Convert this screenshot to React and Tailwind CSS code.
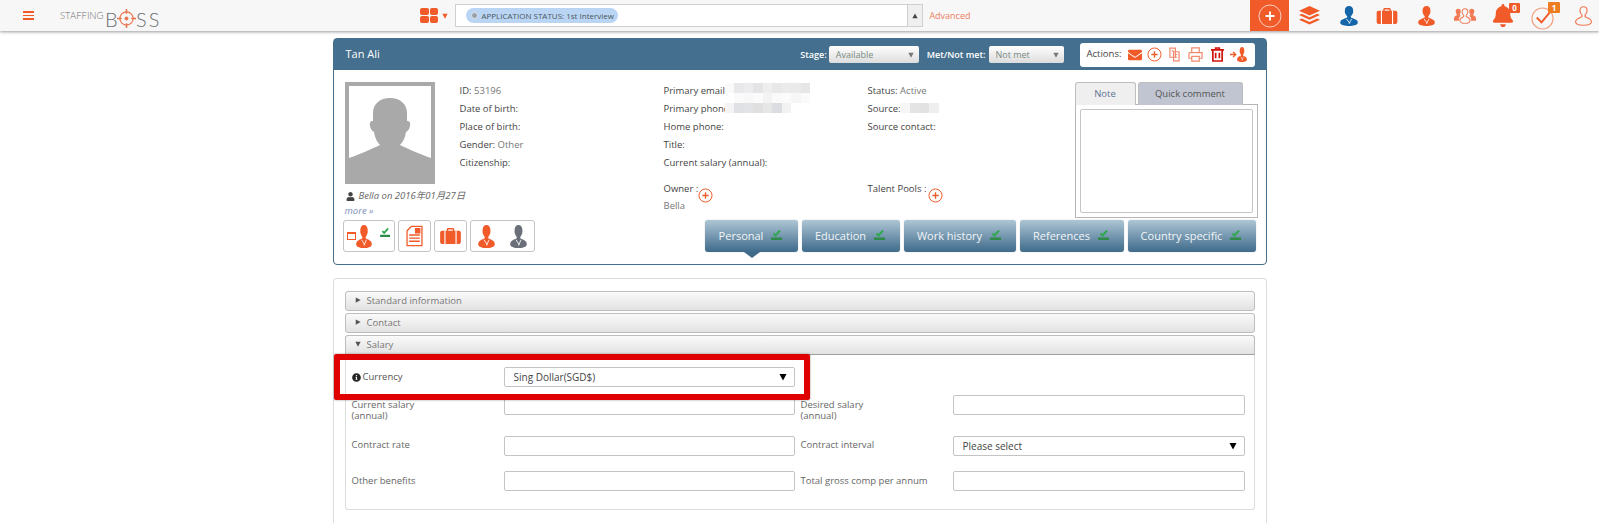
import React from 'react'
import { FaBell, FaEnvelope, FaInfoCircle, FaUser } from 'react-icons/fa'

const Bust = ({ className }) => (
  <svg viewBox="0 0 24 28" className={className} fill="currentColor" preserveAspectRatio="none">
    <path d="M12 0c3.500 0 5.500 2.500 5.500 6 0 1.500.3 3-.5 4.500-.6 1.500-1.500 3-2.500 4V16c2 1 6 2 8 4 1 1 1.500 3 1 4.500-1 2-6 3.500-11.500 3.500S1.500 26.500.5 24.500c-.5-1.500 0-3.500 1-4.500 2-2 6-3 8-4v-1.500c-1-1-1.900-2.500-2.500-4-.8-1.500-.5-3-.5-4.500C6.500 2.500 8.500 0 12 0z" />
    <path d="M8.500 18l4.500 6M15.500 18l-3.500 7" fill="none" stroke="#fff" strokeWidth="1.100" />
  </svg>
)

const OutlineBust = ({ className }) => (
  <svg viewBox="0 0 24 26" className={className} fill="none" stroke="currentColor" strokeWidth="1.500" preserveAspectRatio="none">
    <path d="M12 1c3 0 4.500 2.200 4.500 5 0 2.500-1 4.500-2.500 5.500V14c3 1.500 8 2.500 8 6.500 0 3-4 4.500-10 4.500S2 23.500 2 20.500c0-4 5-5 8-6.500v-2.500C8.500 10.500 7.500 8.500 7.500 6 7.500 3.200 9 1 12 1z" />
  </svg>
)

const Group = ({ className }) => (
  <svg viewBox="0 0 26 20" className={className} preserveAspectRatio="none">
    <path fill="currentColor" d="M5 1c2 0 3 1.500 3 3.300 0 1.500-.6 2.700-1.300 3.400v1.100l1.500.8C6.500 10.800 5.800 12.500 5.800 14.500V16H0v-3c0-2.200 2-3.200 3.300-3.800V7.700C2.600 7 2 5.800 2 4.300 2 2.500 3 1 5 1zM21 1c2 0 3 1.500 3 3.300 0 1.500-.6 2.700-1.300 3.400v1.500c1.300.6 3.300 1.600 3.300 3.800v3h-5.800v-1.500c0-2-.7-3.700-2.400-4.700l1.500-.8V7.700C18.600 7 18 5.800 18 4.300 18 2.500 19 1 21 1z" />
    <path fill="#f7f7f7" stroke="currentColor" strokeWidth="1.200" d="M13 1c2.300 0 3.400 1.800 3.400 3.800 0 1.800-.8 3.400-1.900 4.200v1.800c1.800.9 4.500 1.700 4.500 4.400 0 2.500-2.500 4-6 4s-6-1.500-6-4c0-2.700 2.700-3.500 4.500-4.400V9c-1.100-.8-1.900-2.400-1.900-4.200C9.600 2.800 10.700 1 13 1z" />
  </svg>
)

const Layers = ({ className }) => (
  <svg viewBox="0 0 22 20" className={className} fill="currentColor">
    <path d="M11 0l11 5-11 5L0 5z" />
    <path d="M0 9.500l3-1.300 8 3.600 8-3.600 3 1.300-11 5z" />
    <path d="M0 14.500l3-1.300 8 3.600 8-3.600 3 1.300-11 5z" />
  </svg>
)

const Briefcase = ({ className }) => (
  <svg viewBox="0 0 22 17" className={className} fill="currentColor">
    <path fillRule="evenodd" d="M7 3V1.500C7 .7 7.700 0 8.500 0h5c.8 0 1.500.7 1.500 1.500V3h5c1.100 0 2 .9 2 2v10c0 1.100-.9 2-2 2H2c-1.100 0-2-.9-2-2V5c0-1.100.9-2 2-2zm1.500-1.500V3h5V1.500z" />
    <path d="M4.500 3h1.200v14H4.500zM16.300 3h1.200v14h-1.200z" fill="#fff" />
  </svg>
)

const PlusCircle = ({ className }) => (
  <svg viewBox="0 0 20 20" className={className} fill="none" stroke="currentColor" strokeWidth="1.300">
    <circle cx="10" cy="10" r="8.700" />
    <path d="M10 5.800v8.400M5.800 10h8.400" strokeWidth="1.800" />
  </svg>
)

const Check = ({ className }) => (
  <svg viewBox="0 0 12 10" className={className}>
    <path d="M2.500 3.500l2 2 4.500-5" fill="none" stroke="#2fa84f" strokeWidth="2" />
    <path d="M0 7.500h11V10H0z" fill="#2e8b47" />
  </svg>
)

const Caret = ({ className }) => (
  <svg viewBox="0 0 8 8" className={className} fill="currentColor">
    <path d="M.5 1h7L4 7.500z" />
  </svg>
)

const GridIcon = () => (
  <div className="grid grid-cols-2 gap-[1px] w-[18px] h-[15px]">
    <span className="bg-[#f15a29] rounded-[2px]" />
    <span className="bg-[#f15a29] rounded-[2px]" />
    <span className="bg-[#f15a29] rounded-[2px]" />
    <span className="bg-[#f15a29] rounded-[2px]" />
  </div>
)

const Logo = () => (
  <div className="flex items-start h-[24px] ml-[26px] text-[#6d6e71] font-['Lato',sans-serif] font-light">
    <span className="text-[9.500px] leading-[10px] mt-[7px] w-[45px]">STAFFING</span>
    <span className="text-[20px] leading-[20px] mt-[5px] w-[12px]">B</span>
    <svg viewBox="0 0 20 20" className="w-[19px] h-[19px] mt-[5px] text-[#e8734a]" fill="none" stroke="currentColor">
      <circle cx="10" cy="10" r="7" strokeWidth="1.200" />
      <circle cx="10" cy="10" r="1.600" fill="currentColor" />
      <path d="M10 0v5M10 15v5M0 10h5M15 10h5" strokeWidth="1.500" />
    </svg>
    <span className="text-[20px] leading-[20px] mt-[5px] tracking-[2px]">SS</span>
  </div>
)

const TopBar = () => (
  <header className="flex items-center h-[31px] bg-[#f7f7f7] shadow-[0_1px_3px_rgba(0,0,0,0.4)] relative text-[#f15a29]">
    <div className="flex flex-col gap-[2px] w-[11px] ml-[23px]">
      <span className="h-[1.500px] bg-[#f15a29]" />
      <span className="h-[1.500px] bg-[#f15a29]" />
      <span className="h-[1.500px] bg-[#f15a29]" />
    </div>
    <Logo />
    <div className="ml-[259px] flex items-center">
      <GridIcon />
      <Caret className="w-[6px] h-[6px] ml-[4px]" />
    </div>
    <div className="ml-[7px] flex items-stretch w-[468px] h-[23px] bg-white border border-[#cfcfcf]">
      <div className="flex-1 flex items-center pl-[10px]">
        <span className="flex items-center h-[15px] w-[152px] rounded-full bg-[#b9d5f3] pl-[5px] gap-[3px] text-[#4a5560] text-[8px] whitespace-nowrap">
          <span className="w-[7px] h-[7px] shrink-0 rounded-full bg-[#9aa3ad] border border-[#dfe5ea]" />
          APPLICATION STATUS: 1st Interview
        </span>
      </div>
      <div className="w-[15px] border-l border-[#cfcfcf] bg-[#efefef] flex items-center justify-center">
        <Caret className="w-[6px] h-[6px] rotate-180 text-[#444]" />
      </div>
    </div>
    <span className="ml-[6px] text-[9px] text-[#f08060]">Advanced</span>
    <div className="ml-auto flex items-center h-full">
      <div className="w-[39px] h-full bg-[#f15a29] flex items-center justify-center">
        <svg viewBox="0 0 24 24" className="w-[24px] h-[24px]" fill="none" stroke="#fff">
          <circle cx="12" cy="12" r="11" strokeOpacity="0.7" />
          <path d="M12 7.500v9M7.500 12h9" strokeWidth="1.800" />
        </svg>
      </div>
      <Layers className="w-[21px] h-[19px] ml-[10px]" />
      <Bust className="w-[18px] h-[20px] ml-[20px] text-[#1565a9]" />
      <Briefcase className="w-[22px] h-[16px] ml-[18px]" />
      <Bust className="w-[17px] h-[20px] ml-[20px]" />
      <Group className="w-[22px] h-[16px] ml-[19px] text-[#f27a55]" />
      <div className="relative ml-[16px] w-[28px] h-[24px]">
        <FaBell className="w-[22px] h-[23px]" />
        <span className="absolute -top-[1px] left-[17px] w-[11px] h-[10px] bg-[#f15a29] rounded-[1px] text-white text-[8px] leading-[10px] text-center font-bold">0</span>
      </div>
      <div className="relative ml-[11px] w-[29px] h-[24px]">
        <svg viewBox="0 0 24 24" className="w-[23px] h-[23px] mt-[3px]" fill="none" stroke="#f3a083" strokeWidth="1.200">
          <circle cx="12" cy="12" r="11" />
          <path d="M6 11l5 5 9-11" stroke="#f15a29" strokeWidth="2" />
        </svg>
        <span className="absolute -top-[2px] left-[17px] w-[12px] h-[11px] bg-[#ee7d22] rounded-[1px] text-white text-[8px] leading-[11px] text-center font-bold">1</span>
      </div>
      <OutlineBust className="w-[19px] h-[20px] ml-[14px] mr-[6px] text-[#f27a55]" />
    </div>
  </header>
)

const Row = ({ label, value, children }) => (
  <div className="relative h-[18px] leading-[18px] whitespace-nowrap">
    <span className="text-[#444]">{label}</span>
    {value && <span className="text-[#777]"> {value}</span>}
    {children}
  </div>
)

// blurred-out contact details
const Mosaic = ({ rows, className }) => (
  <div className={`absolute z-10 flex flex-col ${className}`}>
    {rows.map((row, i) => (
      <div key={i} className="flex h-[10px]">
        {row.map((c, j) => (
          <span key={j} className="w-[9.500px] h-full" style={{ background: c }} />
        ))}
      </div>
    ))}
  </div>
)

const HeaderSelect = ({ value, width }) => (
  <div className={`flex items-center justify-between h-[17px] ${width} rounded-[2px] bg-gradient-to-b from-white to-[#dcdcdc] pl-[7px] pr-[5px] text-[#7a8a80] text-[9px]`}>
    {value}
    <Caret className="w-[6px] h-[6px] text-[#777]" />
  </div>
)

const IconBox = ({ className, children }) => (
  <div className={`flex items-center justify-center h-[32px] bg-white border border-[#c4c4c4] rounded-[3px] ${className}`}>
    {children}
  </div>
)

const InfoTab = ({ label, width, active }) => (
  <div className={`relative flex items-center justify-center gap-[8px] h-[32px] ${width} rounded-[3px] bg-gradient-to-b from-[#aec6d5] to-[#3f6b8b] text-white/90 text-[11px] shadow-[0_0_1px_#999]`}>
    {label}
    <Check className="w-[12px] h-[10px] -mt-[2px]" />
    {active && <span className="absolute left-[39px] -bottom-[6px] border-x-[8px] border-t-[6px] border-x-transparent border-t-[#3f6b8b]" />}
  </div>
)

const ProfileCard = () => (
  <section className="border border-[#456f8e] rounded-[4px] bg-white h-[227px]">
    <div className="flex items-center justify-between h-[31px] bg-[#456f8e] pl-[12px] pr-[11px]">
      <span className="text-white text-[11px]">Tan Ali</span>
      <div className="flex items-center">
        <span className="text-white text-[9px] font-semibold mr-[2px]">Stage:</span>
        <HeaderSelect value="Available" width="w-[90px]" />
        <span className="text-white text-[9px] font-semibold ml-[8px] mr-[3px]">Met/Not met:</span>
        <HeaderSelect value="Not met" width="w-[75px]" />
        <div className="flex items-center h-[24px] w-[175px] ml-[16px] bg-white rounded-[3px] pl-[7px] text-[9.500px] text-[#f15a29]">
          <span className="text-[#444] w-[41px]">Actions:</span>
          <FaEnvelope className="w-[14px] h-[14px]" />
          <PlusCircle className="w-[15px] h-[15px] ml-[5px]" />
          <svg viewBox="0 0 12 16" className="w-[11px] h-[15px] ml-[7px] text-[#f08a6c]" fill="none" stroke="currentColor" strokeWidth="1.300">
            <path d="M1 1h6v10H1zM5 5h6v10H5z" />
            <path d="M3 4h2M7 8h2M7 11h2" />
          </svg>
          <svg viewBox="0 0 16 16" className="w-[15px] h-[15px] ml-[8px] text-[#f08a6c]" fill="none" stroke="currentColor" strokeWidth="1.300">
            <path d="M4 6V1h8v5M1 6h14v6h-3M4 12H1V6M4 10h8v5H4z" />
          </svg>
          <svg viewBox="0 0 14 16" className="w-[13px] h-[15px] ml-[8px] text-[#d0140c]" fill="none" stroke="currentColor" strokeWidth="1.800">
            <path d="M0 3h14M5 3V1h4v2M2 3v12h10V3M5 6v6M9 6v6" />
          </svg>
          <div className="flex items-center ml-[6px]">
            <svg viewBox="0 0 8 8" className="w-[7px] h-[7px] shrink-0" fill="none" stroke="currentColor" strokeWidth="1.600">
              <path d="M0 4h6M3.500 1l3 3-3 3" />
            </svg>
            <Bust className="w-[10px] h-[15px] shrink-0" />
          </div>
        </div>
      </div>
    </div>

    <div className="flex h-[148px] pl-[11px] pt-[12px]">
      <div className="w-[115px]">
        <div className="w-[90px] h-[102px] bg-[#a9a9a9] p-[4px] pb-0">
          <svg viewBox="0 0 82 98" className="w-full h-full bg-white">
            <path fill="#a9a9a9" d="M41 12c10 0 17 6 17 15v8c3 0 3.500 2 3 5-.5 3-2 5-4 6-1 6-3 10-6 13 6 3 17 8 31 13v26H0V72c14-5 25-10 31-13-3-3-5-7-6-13-2-1-3.500-3-4-6-.5-3 0-5 3-5v-8c0-9 7-15 17-15z" />
          </svg>
        </div>
        <div className="flex items-center gap-[4px] mt-[5px] h-[14px] whitespace-nowrap italic text-[#666]">
          <FaUser className="w-[9px] h-[9px] shrink-0 text-[#444] ml-[1px]" />
          Bella on 2016年01月27日
        </div>
        <div className="italic text-[#7a8db8] leading-[16px]">more »</div>
      </div>

      <div className="w-[204px]">
        <Row label="ID:" value="53196" />
        <Row label="Date of birth:" />
        <Row label="Place of birth:" />
        <Row label="Gender:" value="Other" />
        <Row label="Citizenship:" />
      </div>

      <div className="w-[204px]">
        <Row label="Primary email">
          <Mosaic className="left-[61px] top-[1px]" rows={[
            ['#fafafa', '#e8e8ea', '#ececee', '#e4e4e6', '#eeeeee', '#e8e8e8', '#ebebeb', '#eaeaea', '#e6e6e6'],
            ['#ffffff', '#fafafa', '#f8f8f8', '#fbfbfb', '#f3f3f3', '#fafafa', '#fbfbfb', '#f6f6f6', '#fafafa'],
            ['#f4f4f4', '#e0e1e4', '#e2e3e6', '#e0e0e0', '#e6e6e6', '#dcdde0', '#f2f2f2'],
          ]} />
        </Row>
        <Row label="Primary phone" />
        <Row label="Home phone:" />
        <Row label="Title:" />
        <Row label="Current salary (annual):" />
        <div className="flex items-start h-[18px] mt-[8px] leading-[18px] text-[#444]">
          Owner :
          <PlusCircle className="w-[15px] h-[15px] mt-[8px] text-[#f15a29]" />
        </div>
        <div className="text-[#777] leading-[12px] mt-[2px]">Bella</div>
      </div>

      <div className="w-[207px]">
        <Row label="Status:" value="Active" />
        <Row label="Source:">
          <Mosaic className="left-[33px] top-[3px]" rows={[['#f6f6f6', '#e4e4e4', '#e2e2e2', '#eeeeee']]} />
        </Row>
        <Row label="Source contact:" />
        <div className="h-[36px]" />
        <div className="flex items-start h-[18px] mt-[8px] leading-[18px] text-[#444]">
          Talent Pools :
          <PlusCircle className="w-[15px] h-[15px] ml-[2px] mt-[8px] text-[#f15a29]" />
        </div>
      </div>

      <div className="w-[183px]">
        <div className="flex h-[23px] gap-[2px]">
          <div className="flex items-center justify-center w-[61px] bg-[#efefef] border border-b-0 border-[#bdbdbd] rounded-t-[3px] text-[#5f7393]">Note</div>
          <div className="flex items-center justify-center w-[105px] bg-[#c0c5d1] border border-b-0 border-[#bdbdbd] rounded-t-[3px] text-[#555]">Quick comment</div>
        </div>
        <div className="h-[114px] border border-[#b5b5b5] -mt-px p-[4px] bg-white">
          <textarea className="block w-full h-full border border-[#c4c4c4] rounded-[2px] resize-none" />
        </div>
      </div>
    </div>

    <div className="flex pl-[9px] pt-[2px]">
      <div className="flex gap-[3px] w-[362px]">
        <IconBox className="w-[52px] gap-[8px]">
          <div className="flex items-center">
            <span className="w-[9px] h-[8px] shrink-0 border border-[#f15a29] border-t-[2px] bg-white" />
            <Bust className="w-[16px] h-[23px] shrink-0 text-[#f15a29]" />
          </div>
          <Check className="w-[11px] h-[9px] -mt-[7px]" />
        </IconBox>
        <IconBox className="w-[33px]">
          <svg viewBox="0 0 16 20" className="w-[17px] h-[22px] text-[#f15a29]" fill="none" stroke="currentColor" strokeWidth="1.200">
            <path d="M5 1h10v18H1V5z" />
            <path d="M9 3h4v4H9z" fill="currentColor" />
            <path d="M3 9h10M3 12h10M3 15h10" strokeWidth="1.400" />
          </svg>
        </IconBox>
        <IconBox className="w-[33px]">
          <Briefcase className="w-[21px] h-[16px] text-[#f15a29]" />
        </IconBox>
        <IconBox className="w-[65px] gap-[15px]">
          <Bust className="w-[17px] h-[23px] text-[#f15a29]" />
          <Bust className="w-[17px] h-[23px] text-[#6b6f7a]" />
        </IconBox>
      </div>
      <div className="flex gap-[4px]">
        <InfoTab label="Personal" width="w-[93px]" active />
        <InfoTab label="Education" width="w-[98px]" />
        <InfoTab label="Work history" width="w-[112px]" />
        <InfoTab label="References" width="w-[104px]" />
        <InfoTab label="Country specific" width="w-[128px]" />
      </div>
    </div>
  </section>
)

const Accordion = ({ label, open }) => (
  <div className={`flex items-center h-[20px] border border-[#bdbdbd] bg-gradient-to-b from-[#fafafa] to-[#e2e2e2] pl-[9px] text-[#777] ${open ? 'rounded-t-[3px] border-b-[#9f9f9f]' : 'rounded-[3px]'}`}>
    <Caret className={`w-[6px] h-[6px] text-[#555] mr-[6px] -mt-[3px] ${open ? '' : '-rotate-90'}`} />
    {label}
  </div>
)

const TextInput = () => (
  <input className="block w-full h-[20px] bg-white border border-[#c4c4c4] rounded-[2px]" />
)

const SelectBox = ({ value }) => (
  <div className="relative h-[20px]">
    <select className="block w-full h-full appearance-none bg-white border border-[#c4c4c4] rounded-[2px] pl-[9px] text-[10px] text-[#444]">
      <option>{value}</option>
    </select>
    <Caret className="absolute right-[8px] top-[6px] w-[8px] h-[8px] text-black" />
  </div>
)

const SalaryForm = () => (
  <section className="relative mt-[13px] border border-[#dddddd] border-b-0 rounded-t-[4px] bg-white px-[11px] pt-[12px] h-[245px]">
    <div className="flex flex-col gap-[2px]">
      <Accordion label="Standard information" />
      <Accordion label="Contact" />
      <Accordion label="Salary" open />
    </div>
    <div className="border border-t-0 border-[#dddddd] rounded-b-[3px] h-[155px] pl-[6px] pr-[9px] pt-[12px] text-[#666]">
      <div className="grid grid-cols-[152px_291px_6px_152px_292px] items-start">
        <div className="flex items-center gap-[2px] h-[20px] text-[#555]">
          <FaInfoCircle className="w-[9px] h-[9px] text-[#222]" />
          Currency
        </div>
        <SelectBox value="Sing Dollar(SGD$)" />
        <div className="col-span-3 h-[28px]" />

        <div className="leading-[11px] pt-[4px]">Current salary<br />(annual)</div>
        <TextInput />
        <div />
        <div className="leading-[11px] pt-[4px]">Desired salary<br />(annual)</div>
        <TextInput />
        <div className="col-span-5 h-[15px]" />

        <div className="h-[20px] leading-[18px]">Contract rate</div>
        <TextInput />
        <div />
        <div className="h-[20px] leading-[18px]">Contract interval</div>
        <SelectBox value="Please select" />
        <div className="col-span-5 h-[15px]" />

        <div className="h-[20px] leading-[20px]">Other benefits</div>
        <TextInput />
        <div />
        <div className="h-[20px] leading-[20px]">Total gross comp per annum</div>
        <TextInput />
      </div>
    </div>
    {/* Red highlight drawn over the Currency row */}
    <div className="absolute left-0 top-[75px] w-[476px] h-[46px] border-[6px] border-[#e00000] rounded-[2px] shadow-[0_0_2px_rgba(0,0,0,0.5)] pointer-events-none" />
  </section>
)

const App = () => {
  return (
    <div className="h-[523px] overflow-hidden bg-white font-['Open_Sans','Noto_Sans_CJK_SC',sans-serif] text-[9.500px]">
      <TopBar />
      <main className="w-[934px] mx-auto mt-[7px]">
        <ProfileCard />
        <SalaryForm />
      </main>
    </div>
  )
}

export default App
